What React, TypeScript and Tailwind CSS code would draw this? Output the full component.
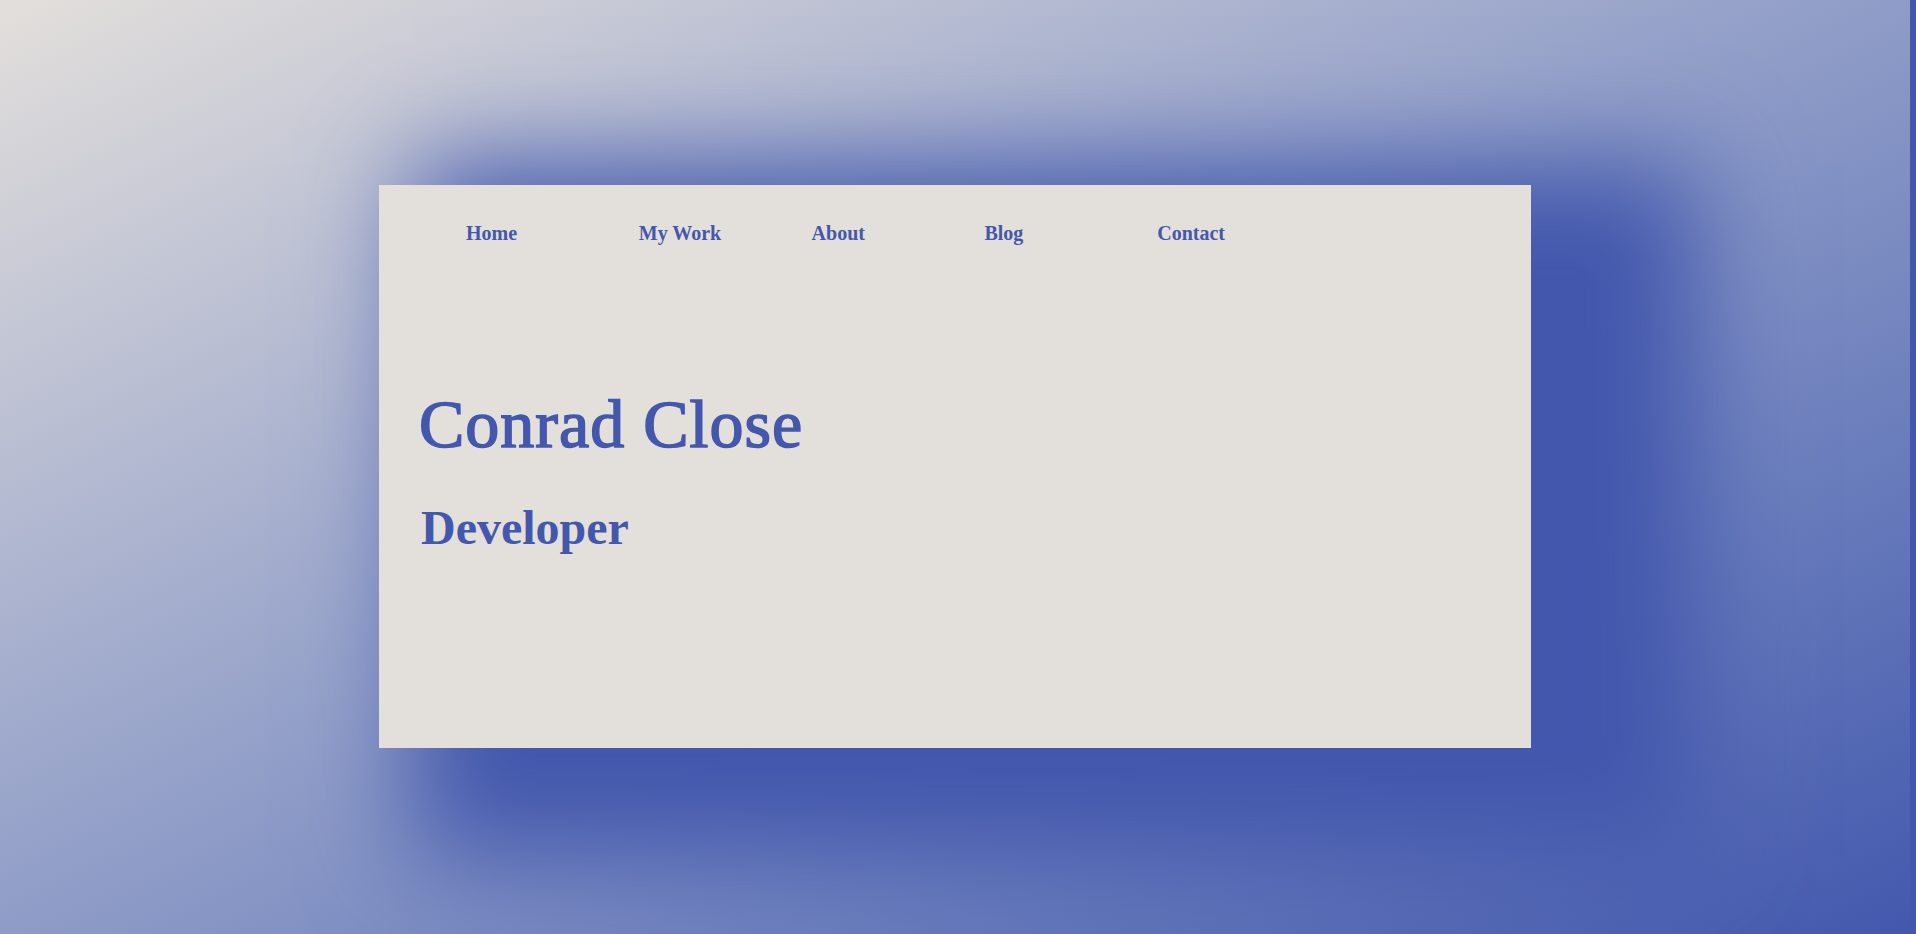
export default function App() {
  const links = ["Home", "My Work", "About", "Blog", "Contact"];

  return (
    <div className="flex h-[934px] w-full overflow-hidden bg-gradient-to-br from-[#e3dfdb] to-[#4358ad]">
      <main className="flex flex-1 items-start justify-center pt-[185px]">
        <section className="flex h-[563px] w-[1152px] flex-col bg-[#e3dfdb] text-[#4358ad] shadow-[100px_45px_100px_65px_#4358ad] font-['Liberation_Serif',serif]">
          <nav className="flex pl-[87px] pt-[38px]">
            {links.map((link) => (
              <a key={link} href="#" className="block w-[172.8px] text-[20px] leading-[20px] font-bold">
                {link}
              </a>
            ))}
          </nav>
          <h1 className="mt-[146px] pl-[40px] text-[68px] leading-[70px] font-normal tracking-[1px] [-webkit-text-stroke:1.6px_#4358ad]">
            Conrad Close
          </h1>
          <h2 className="mt-[45px] pl-[42px] text-[48px] leading-[48px] font-bold">Developer</h2>
        </section>
      </main>
      <div className="w-[6px] bg-[#4358ad]" />
    </div>
  );
}
